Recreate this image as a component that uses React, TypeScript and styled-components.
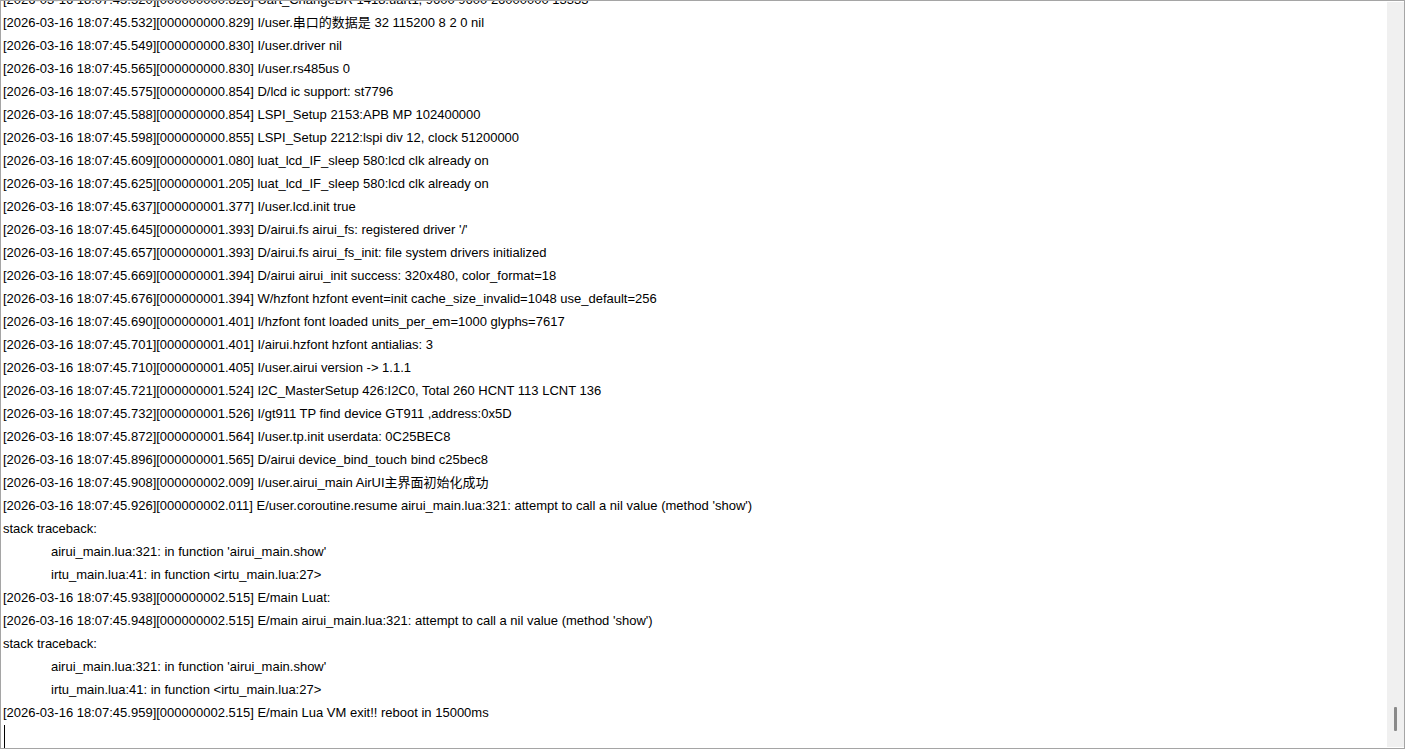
import React from "react";
import styled, { createGlobalStyle } from "styled-components";

const Global = createGlobalStyle`
  html, body { margin: 0; padding: 0; background: #ffffff; }
  * { box-sizing: border-box; }
`;

const Window = styled.div`
  width: 1405px;
  height: 749px;
  border: 1px solid #a5a5a5;
  display: flex;
  background: #ffffff;
  overflow: hidden;
`;

const LogArea = styled.div`
  flex: 1;
  overflow: hidden;
  padding-left: 2px;
  font-family: "Liberation Sans", "Noto Sans CJK SC", sans-serif;
  font-size: 13px;
  color: #000000;
`;

const Lines = styled.div`
  margin-top: -13px;
  display: flex;
  flex-direction: column;
`;

const Line = styled.div<{ $indent?: boolean }>`
  height: 23px;
  line-height: 23px;
  white-space: pre;
  padding-left: ${(p) => (p.$indent ? "48px" : "0")};
`;

const Caret = styled.div`
  width: 1px;
  height: 23px;
  margin-top: 1px;
  margin-left: 1px;
  background: #000000;
`;

const ScrollTrack = styled.div`
  width: 17px;
  margin: 1px 0;
  background: #f0f0f0;
  display: flex;
  flex-direction: column;
  justify-content: flex-end;
  align-items: center;
  padding-bottom: 16px;
`;

const Thumb = styled.div`
  width: 3px;
  height: 24px;
  background: #8a8a8a;
  border-radius: 1px;
`;

type Entry = { text: string; indent?: boolean };

const entries: Entry[] = [
  { text: "[2026-03-16 18:07:45.520][000000000.828] Uart_ChangeBR 1418:uart1, 9600 9600 26000000 13333" },
  { text: "[2026-03-16 18:07:45.532][000000000.829] I/user.串口的数据是 32 115200 8 2 0 nil" },
  { text: "[2026-03-16 18:07:45.549][000000000.830] I/user.driver nil" },
  { text: "[2026-03-16 18:07:45.565][000000000.830] I/user.rs485us 0" },
  { text: "[2026-03-16 18:07:45.575][000000000.854] D/lcd ic support: st7796" },
  { text: "[2026-03-16 18:07:45.588][000000000.854] LSPI_Setup 2153:APB MP 102400000" },
  { text: "[2026-03-16 18:07:45.598][000000000.855] LSPI_Setup 2212:lspi div 12, clock 51200000" },
  { text: "[2026-03-16 18:07:45.609][000000001.080] luat_lcd_IF_sleep 580:lcd clk already on" },
  { text: "[2026-03-16 18:07:45.625][000000001.205] luat_lcd_IF_sleep 580:lcd clk already on" },
  { text: "[2026-03-16 18:07:45.637][000000001.377] I/user.lcd.init true" },
  { text: "[2026-03-16 18:07:45.645][000000001.393] D/airui.fs airui_fs: registered driver '/'" },
  { text: "[2026-03-16 18:07:45.657][000000001.393] D/airui.fs airui_fs_init: file system drivers initialized" },
  { text: "[2026-03-16 18:07:45.669][000000001.394] D/airui airui_init success: 320x480, color_format=18" },
  { text: "[2026-03-16 18:07:45.676][000000001.394] W/hzfont hzfont event=init cache_size_invalid=1048 use_default=256" },
  { text: "[2026-03-16 18:07:45.690][000000001.401] I/hzfont font loaded units_per_em=1000 glyphs=7617" },
  { text: "[2026-03-16 18:07:45.701][000000001.401] I/airui.hzfont hzfont antialias: 3" },
  { text: "[2026-03-16 18:07:45.710][000000001.405] I/user.airui version -> 1.1.1" },
  { text: "[2026-03-16 18:07:45.721][000000001.524] I2C_MasterSetup 426:I2C0, Total 260 HCNT 113 LCNT 136" },
  { text: "[2026-03-16 18:07:45.732][000000001.526] I/gt911 TP find device GT911 ,address:0x5D" },
  { text: "[2026-03-16 18:07:45.872][000000001.564] I/user.tp.init userdata: 0C25BEC8" },
  { text: "[2026-03-16 18:07:45.896][000000001.565] D/airui device_bind_touch bind c25bec8" },
  { text: "[2026-03-16 18:07:45.908][000000002.009] I/user.airui_main AirUI主界面初始化成功" },
  { text: "[2026-03-16 18:07:45.926][000000002.011] E/user.coroutine.resume airui_main.lua:321: attempt to call a nil value (method 'show')" },
  { text: "stack traceback:" },
  { text: "airui_main.lua:321: in function 'airui_main.show'", indent: true },
  { text: "irtu_main.lua:41: in function <irtu_main.lua:27>", indent: true },
  { text: "[2026-03-16 18:07:45.938][000000002.515] E/main Luat:" },
  { text: "[2026-03-16 18:07:45.948][000000002.515] E/main airui_main.lua:321: attempt to call a nil value (method 'show')" },
  { text: "stack traceback:" },
  { text: "airui_main.lua:321: in function 'airui_main.show'", indent: true },
  { text: "irtu_main.lua:41: in function <irtu_main.lua:27>", indent: true },
  { text: "[2026-03-16 18:07:45.959][000000002.515] E/main Lua VM exit!! reboot in 15000ms" },
];

export default function App() {
  return (
    <>
      <Global />
      <Window>
        <LogArea>
          <Lines>
            {entries.map((e, i) => (
              <Line key={i} $indent={e.indent}>
                {e.text}
              </Line>
            ))}
            <Caret />
          </Lines>
        </LogArea>
        <ScrollTrack>
          <Thumb />
        </ScrollTrack>
      </Window>
    </>
  );
}
